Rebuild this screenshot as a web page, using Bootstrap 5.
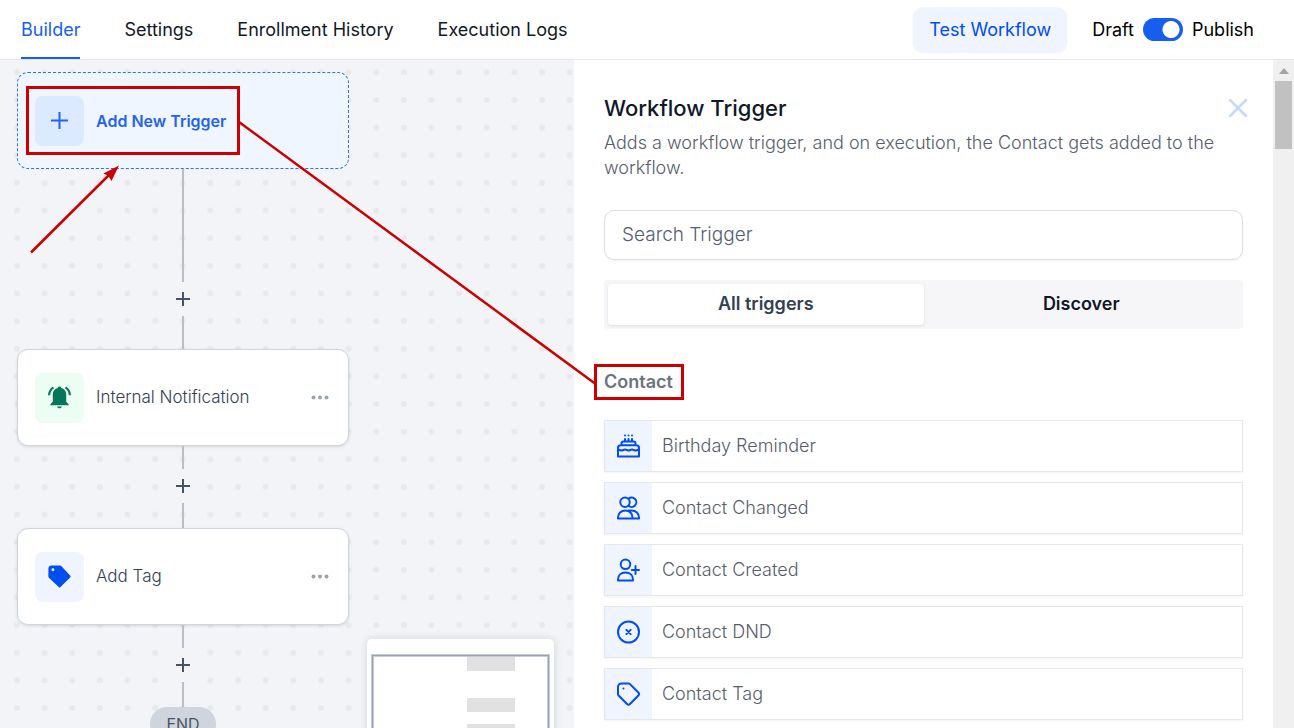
<!DOCTYPE html>
<html lang="en">
<head>
<meta charset="utf-8">
<meta name="viewport" content="width=device-width, initial-scale=1">
<title>Workflow Builder</title>
<link href="https://cdn.jsdelivr.net/npm/bootstrap@5.3.0/dist/css/bootstrap.min.css" rel="stylesheet">
<style>
  body { font-family: Inter, "Liberation Sans", sans-serif; font-size: 18px; color: #111827; }
  .topbar { height: 60px; border-bottom: 1px solid #e5e7eb; padding: 0 40px 0 21px; }
  .tabs-main { gap: 44px; }
  .tabs-main .nav-link { padding: 0; height: 59px; line-height: 59px; color: #111827; font-weight: 400; border-bottom: 2px solid transparent; }
  .tabs-main .nav-link.active { color: #155eef; border-bottom-color: #155eef; }
  .btn-test { height: 45px; padding: 0 16px; border: 0; border-radius: 10px; background: #eff4ff; color: #004eeb; font-size: 18px; font-weight: 400; box-shadow: 0 1px 2px rgba(16,24,40,.06); }
  .state-text { color: #000; font-weight: 400; }
  .state-gap { gap: 9px; }
  .form-switch .toggle { width: 40px; height: 23px; margin: 0; border: 0; background-color: #155eef; background-image: radial-gradient(circle at 28px 50%, #fff 8px, rgba(255,255,255,0) 9px); background-position: 0 0; }
  .form-switch .toggle:not(:checked) { background-color: #98a2b3; background-image: radial-gradient(circle at 12px 50%, #fff 8px, rgba(255,255,255,0) 9px); }

  .workspace { display: grid; grid-template-columns: minmax(0, 574fr) minmax(0, 720fr); min-height: 0; }
  .canvas { background: #f2f4f7; }
  .flow { position: relative; width: 332px; margin: 12px 0 0 17px; }
  .step { width: 100%; height: 97px; padding: 0 17px; gap: 12px; border: 1px solid #d0d5dd; border-radius: 11px; background: #fff; box-shadow: 0 1px 3px rgba(16,24,40,.12); color: #344054; font-size: 17px; font-weight: 300; }
  .step-new { border: 1px dashed #2970ff; background: #eff6ff; color: #2563eb; font-size: 16px; font-weight: 600; box-shadow: none; text-align: left; }
  .tile { width: 49px; height: 50px; border-radius: 8px; }
  .tile-add { background: #dbeafe; }
  .tile-bell { background: #ecfdf3; }
  .tile-tag { background: #eff4ff; }
  .wire { width: 2px; background: #bcbec4; }
  .wire-start { height: 113px; }
  .wire-long { height: 33px; }
  .wire-out { height: 23px; }
  .wire-in { height: 25px; }
  .plus { width: 34px; height: 34px; border-radius: 50%; border: 0; padding: 0; background: #f3f4f6; }
  .end-pill { width: 66px; height: 35px; line-height: 35px; border-radius: 17px; background: #d0d5dd; color: #475467; font-size: 16px; text-align: center; }
  .minimap { right: 20px; bottom: -60px; width: 187px; height: 149px; border-radius: 5px; background: #fff; box-shadow: 0 0 8px rgba(16,24,40,.14); }

  .panel { padding: 34px 30px 0; background: #fff; }
  .panel-title { font-size: 22px; line-height: 28px; font-weight: 500; color: #101828; margin: 0; }
  .panel-text { line-height: 25px; font-weight: 300; color: #565d6d; margin: 8px 0 30px; }
  .btn-x { border: 0; padding: 0; background: none; width: 28px; height: 28px; margin-right: -9px; }
  .search { height: 50px; border: 1px solid #dcdfe6; border-radius: 10px; padding: 0 17px 2px; font-size: 19px; font-weight: 300; box-shadow: 0 1px 2px rgba(16,24,40,.05); }
  .search::placeholder { color: #525e74; }
  .seg { margin-top: 20px; padding: 4px; height: 49px; border-radius: 4px; background: #f6f6f9; }
  .seg .btn { border: 0; border-radius: 4px; padding: 0 0 2px; font-size: 18px; font-weight: 600; color: #101828; }
  .seg .btn.active { background: #fff; color: #344054; box-shadow: 0 1px 3px rgba(16,24,40,.1); }
  .group-title { margin: 39px 0 24px; font-size: 18px; line-height: 28px; font-weight: 600; color: #6b7280; }
  .choices { gap: 10px; }
  .choice { height: 52px; gap: 10px; border: 1px solid #e4e7ec; color: #565d6d; font-size: 18px; font-weight: 300; box-shadow: 0 1px 2px rgba(16,24,40,.05); background: #fff; padding: 0; }
  .choice-label { padding-bottom: 2px; }
  .choice-icon { width: 47px; height: 50px; background: #eff4ff; }
  .rail { width: 21px; background: #f0f0f0; padding: 0 2px; }
  .rail-arrow { height: 21px; }
  .rail-thumb { height: 68px; background: #c1c1c1; }
  .notes { left: 0; top: 0; pointer-events: none; }
  .ln { fill: none; stroke: #004eeb; stroke-width: 2; stroke-linecap: round; stroke-linejoin: round; }
</style>
</head>
<body class="d-flex flex-column vh-100 overflow-hidden">

<header class="topbar d-flex align-items-center justify-content-between flex-shrink-0 bg-white">
  <nav class="nav tabs-main flex-nowrap text-nowrap">
    <a class="nav-link active" href="#" aria-current="page">Builder</a>
    <a class="nav-link" href="#">Settings</a>
    <a class="nav-link" href="#">Enrollment History</a>
    <a class="nav-link" href="#">Execution Logs</a>
  </nav>
  <div class="d-flex align-items-center text-nowrap state-gap">
    <button type="button" class="btn btn-test me-3">Test Workflow</button>
    <span class="state-text">Draft</span>
    <div class="form-check form-switch d-flex align-items-center p-0 m-0 state-gap">
      <input class="form-check-input toggle" type="checkbox" role="switch" id="publish" checked>
      <label class="state-text" for="publish">Publish</label>
    </div>
  </div>
</header>

<main class="workspace flex-grow-1 position-relative">

  <section class="canvas position-relative overflow-hidden">
    <svg class="position-absolute top-0 start-0" width="100%" height="100%" aria-hidden="true">
      <defs>
        <pattern id="dots" x="3" y="-1.5" width="27.64" height="27.64" patternUnits="userSpaceOnUse">
          <circle cx="13.9" cy="13.9" r="3" fill="#e8e9ea"/>
        </pattern>
      </defs>
      <rect width="100%" height="100%" fill="url(#dots)"/>
    </svg>

    <div class="flow d-flex flex-column align-items-center">
      <button type="button" class="step step-new d-flex align-items-center">
        <span class="tile tile-add d-flex align-items-center justify-content-center">
          <svg width="17" height="17" viewBox="0 0 17 17"><path d="M8.500 0v17M0 8.500h17" stroke="#2563eb" stroke-width="2"/></svg>
        </span>
        <span>Add New Trigger</span>
      </button>
      <div class="wire wire-start"></div>
      <button type="button" class="plus d-flex align-items-center justify-content-center" aria-label="Add step">
        <svg width="16" height="16" viewBox="0 0 16 16"><path d="M8 1v14M1 8h14" stroke="#475467" stroke-width="2"/></svg>
      </button>
      <div class="wire wire-long"></div>

      <div class="step d-flex align-items-center">
        <span class="tile tile-bell d-flex align-items-center justify-content-center">
          <svg width="23" height="23" viewBox="0 0 24 24">
            <path d="M12 .6c-1 0-1.700.6-1.800 1.500C7 2.800 5 5.600 5 9v7.500L2.500 19v1.200h19V19L19 16.500V9c0-3.400-2-6.200-5.200-6.900C13.700 1.200 13 .6 12 .6z" fill="#05765a"/>
            <path d="M9.500 21.300h5c-.3 1.200-1.300 1.900-2.500 1.900s-2.200-.7-2.500-1.900z" fill="#05765a"/>
            <path d="M1.200 9.600C1.300 6.200 2.700 3.300 5.700 1.400M22.800 9.600c-.1-3.400-1.500-6.300-4.500-8.200" fill="none" stroke="#05765a" stroke-width="2.200"/>
          </svg>
        </span>
        <span class="flex-grow-1">Internal Notification</span>
        <button type="button" class="btn border-0 p-0 lh-1 d-flex" aria-label="More">
          <svg width="22" height="16" viewBox="0 0 22 16" fill="#98a2b3"><circle cx="4.500" cy="7.500" r="2"/><circle cx="11" cy="7.500" r="2"/><circle cx="17.500" cy="7.500" r="2"/></svg>
        </button>
      </div>
      <div class="wire wire-out"></div>
      <button type="button" class="plus d-flex align-items-center justify-content-center" aria-label="Add step">
        <svg width="16" height="16" viewBox="0 0 16 16"><path d="M8 1v14M1 8h14" stroke="#475467" stroke-width="2"/></svg>
      </button>
      <div class="wire wire-in"></div>

      <div class="step d-flex align-items-center">
        <span class="tile tile-tag d-flex align-items-center justify-content-center">
          <svg width="23" height="23" viewBox="0 0 24 24">
            <path fill-rule="evenodd" d="M4 .4h8.500c.5 0 .8.1 1.100.4L23.300 11.300a1 1 0 0 1 0 1.400L12.800 23.200a1 1 0 0 1-1.400 0L.9 13.200c-.3-.3-.5-.7-.5-1.100V4A3.600 3.600 0 0 1 4 .4zM5.100 3.500a1.500 1.500 0 1 0 0 3 1.500 1.500 0 0 0 0-3z" fill="#004eeb"/>
          </svg>
        </span>
        <span class="flex-grow-1">Add Tag</span>
        <button type="button" class="btn border-0 p-0 lh-1 d-flex" aria-label="More">
          <svg width="22" height="16" viewBox="0 0 22 16" fill="#98a2b3"><circle cx="4.500" cy="7.500" r="2"/><circle cx="11" cy="7.500" r="2"/><circle cx="17.500" cy="7.500" r="2"/></svg>
        </button>
      </div>
      <div class="wire wire-out"></div>
      <button type="button" class="plus d-flex align-items-center justify-content-center" aria-label="Add step">
        <svg width="16" height="16" viewBox="0 0 16 16"><path d="M8 1v14M1 8h14" stroke="#475467" stroke-width="2"/></svg>
      </button>
      <div class="wire wire-in"></div>
      <div class="end-pill">END</div>
    </div>

    <div class="minimap position-absolute">
      <svg class="d-block" width="187" height="149" viewBox="0 0 187 149" aria-hidden="true">
        <path fill="#e1e1e1" d="M100 18h48v14h-48zM100 59h48v14h-48zM100 85h48v14h-48z"/>
        <rect x="5.500" y="16.500" width="176" height="120" fill="none" stroke="#c5ccd8" stroke-width="3"/>
        <rect x="5.500" y="16.500" width="176" height="120" fill="none" stroke="#98a2b3" stroke-width="1"/>
      </svg>
    </div>
  </section>

  <div class="d-flex overflow-hidden">
    <aside class="panel flex-grow-1">
      <div class="d-flex justify-content-between align-items-center">
        <h1 class="panel-title">Workflow Trigger</h1>
        <button type="button" class="btn-x d-flex align-items-center justify-content-center" aria-label="Close">
          <svg width="20" height="20" viewBox="0 0 20 20"><path d="M2 2l16 16M18 2L2 18" stroke="#c7d7fe" stroke-width="2.500" stroke-linecap="round"/></svg>
        </button>
      </div>
      <p class="panel-text">Adds a workflow trigger, and on execution, the Contact gets added to the workflow.</p>
      <input type="text" class="form-control search" placeholder="Search Trigger" aria-label="Search Trigger">
      <div class="seg d-flex">
        <button type="button" class="btn active w-50">All triggers</button>
        <button type="button" class="btn w-50">Discover</button>
      </div>
      <h2 class="group-title">Contact</h2>
      <div class="choices d-grid">
        <button type="button" class="choice d-flex align-items-center">
          <span class="choice-icon d-flex align-items-center justify-content-center">
            <svg class="ln" width="25" height="25" viewBox="0 1 25 25"><path d="M2 23.500V15c0-1.700 1-2.700 2.700-2.700h15.600c1.700 0 2.700 1 2.700 2.700v8.500zM5.500 12v-1.500C5.500 9.200 6.200 8.500 7.500 8.500h10c1.300 0 2 .7 2 2V12M9 8V6M12.500 8V6M16 8V6M2 16.500c1.500 0 2 1 3.500 1s2-1 3.500-1 2 1 3.500 1 2-1 3.500-1 2 1 3.500 1 2-1 3.500-1"/><path d="M9 2.500v.1M12.500 2.500v.1M16 2.500v.1"/></svg>
          </span><span class="choice-label">Birthday Reminder</span>
        </button>
        <button type="button" class="choice d-flex align-items-center">
          <span class="choice-icon d-flex align-items-center justify-content-center">
            <svg class="ln" width="25" height="25" viewBox="0 1 25 25"><circle cx="9" cy="7.300" r="4.700"/><path d="M12.500 3.800a4.700 4.700 0 1 1 0 7M2 23.500v-1C2 18.500 5 15.500 9.300 15.500s7.200 3 7.200 7v1zM12.500 15.500h3c4.500 0 7.500 3 7.500 7v1h-6.500"/></svg>
          </span><span class="choice-label">Contact Changed</span>
        </button>
        <button type="button" class="choice d-flex align-items-center">
          <span class="choice-icon d-flex align-items-center justify-content-center">
            <svg class="ln" width="25" height="25" viewBox="0 1 25 25"><circle cx="9.500" cy="7.300" r="4.800"/><path d="M2 23.500v-1C2 18.300 5 15.500 9.500 15.500s7.500 2.800 7.500 7v1zM19.500 9v8M15.800 13H23"/></svg>
          </span><span class="choice-label">Contact Created</span>
        </button>
        <button type="button" class="choice d-flex align-items-center">
          <span class="choice-icon d-flex align-items-center justify-content-center">
            <svg class="ln" width="25" height="25" viewBox="0 1 25 25"><circle cx="12.500" cy="13" r="10.500"/><path d="M10.400 10.900l4.200 4.200M14.600 10.900l-4.200 4.200"/></svg>
          </span><span class="choice-label">Contact DND</span>
        </button>
        <button type="button" class="choice d-flex align-items-center">
          <span class="choice-icon d-flex align-items-center justify-content-center">
            <svg class="ln" width="25" height="25" viewBox="0 1 25 25"><path d="M5.500 2.500h7c.6 0 1.100.2 1.500.6l8.600 8.700c.7.700.7 1.700 0 2.400l-8.900 9c-.7.700-1.700.7-2.400 0L2.600 14.500c-.4-.4-.6-.9-.6-1.500v-7A3.500 3.500 0 0 1 5.500 2.500zM7.400 7.500h.1"/></svg>
          </span><span class="choice-label">Contact Tag</span>
        </button>
      </div>
    </aside>
    <div class="rail flex-shrink-0" aria-hidden="true">
      <div class="rail-arrow d-flex align-items-center justify-content-center">
        <svg width="10" height="6" viewBox="0 0 10 6"><path d="M5 0l5 6H0z" fill="#a3a3a3"/></svg>
      </div>
      <div class="rail-thumb"></div>
    </div>
  </div>

  <!-- Callouts drawn over both columns -->
  <svg class="notes position-absolute" width="100%" height="100%" aria-hidden="true">
    <g fill="none" stroke="#c00" stroke-width="3">
      <rect x="27.500" y="27.500" width="211" height="66"/>
      <rect x="595.500" y="305.500" width="87" height="33"/>
      <path d="M239 62L595 323.500M31 192.500L110 114" stroke-width="2.500"/>
    </g>
    <path d="M119 105.500L111.500 121L108.500 116L103.500 113.500z" fill="#c00"/>
  </svg>
</main>

<script src="https://cdn.jsdelivr.net/npm/bootstrap@5.3.0/dist/js/bootstrap.bundle.min.js"></script>
</body>
</html>
